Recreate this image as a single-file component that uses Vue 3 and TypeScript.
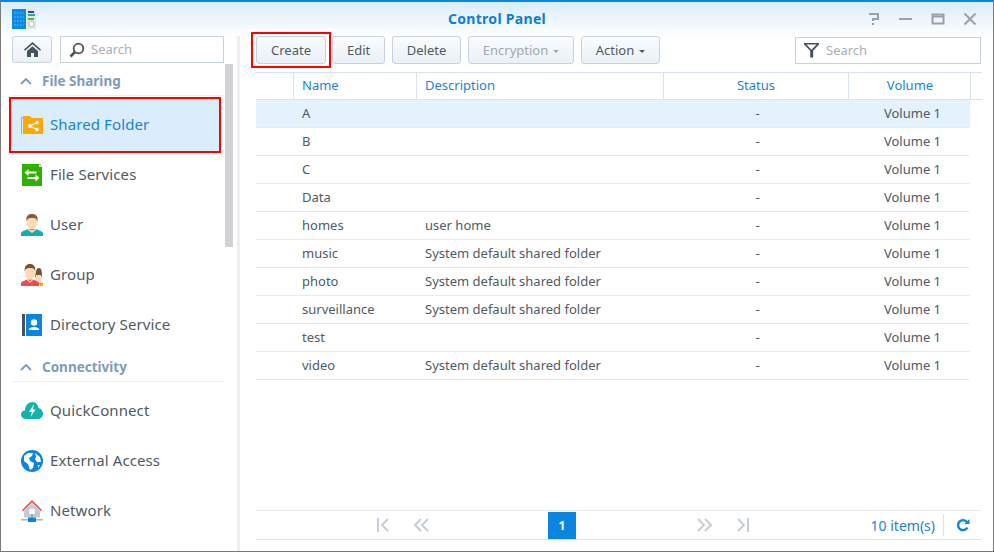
<script setup lang="ts">
// Control Panel window: sidebar with sections, toolbar, shared folder grid, pager
interface Row { name: string; desc: string }
const SYS = 'System default shared folder'
const rows: Row[] = [
  { name: 'A', desc: '' }, { name: 'B', desc: '' }, { name: 'C', desc: '' }, { name: 'Data', desc: '' },
  { name: 'homes', desc: 'user home' }, { name: 'music', desc: SYS }, { name: 'photo', desc: SYS },
  { name: 'surveillance', desc: SYS }, { name: 'test', desc: '' }, { name: 'video', desc: SYS },
]
const sharing = [
  { key: 'folder', label: 'Shared Folder', active: true },
  { key: 'services', label: 'File Services' },
  { key: 'user', label: 'User' },
  { key: 'group', label: 'Group' },
  { key: 'directory', label: 'Directory Service' },
]
const connectivity = [
  { key: 'quick', label: 'QuickConnect' },
  { key: 'external', label: 'External Access' },
  { key: 'network', label: 'Network' },
]
const sections = [
  { title: 'File Sharing', items: sharing },
  { title: 'Connectivity', items: connectivity },
]
</script>

<template>
  <div class="win">
    <header class="titlebar">
      <svg class="logo" width="24" height="20" viewBox="0 0 24 20">
        <rect x="0" y="0" width="14" height="20" fill="#0a8ae4" />
        <path d="M2 4h10M2 8h10M2 12h10M2 16h10" stroke="#5ab4ee" stroke-width="1" stroke-dasharray="2 1" />
        <rect x="15" y="0" width="9" height="20" fill="#e4e6e6" />
        <rect x="16" y="2" width="6" height="2" fill="#3c4a5c" />
        <rect x="16" y="5" width="7" height="2" fill="#22a8c8" />
        <rect x="16" y="9" width="6" height="2" fill="#6eae2c" />
        <circle cx="19.5" cy="15" r="2.6" fill="#fafafa" stroke="#b8bcbc" />
      </svg>
      <span class="title"><span class="lift">Control Panel</span></span>
      <div class="winbtns">
        <svg width="14" height="14" viewBox="0 0 14 14" fill="none" stroke="#98a2ac" stroke-width="2">
          <path d="M2 2h9v5H6v2" /><path d="M6 11v2" />
        </svg>
        <svg width="14" height="14" viewBox="0 0 14 14"><rect x="0" y="6" width="13" height="2" fill="#98a2ac" /></svg>
        <svg width="14" height="14" viewBox="0 0 14 14" fill="none" stroke="#98a2ac">
          <rect x="1.5" y="2.5" width="11" height="9" stroke-width="2" /><path d="M1 4.5h12" stroke-width="2" />
        </svg>
        <svg width="14" height="14" viewBox="0 0 14 14" fill="none" stroke="#98a2ac" stroke-width="2">
          <path d="M1.5 1.5l11 11M12.5 1.5l-11 11" />
        </svg>
      </div>
    </header>

    <div class="body">
      <aside class="side">
        <div class="side-top">
          <button class="homebtn">
            <svg width="17" height="15" viewBox="0 0 17 15" fill="#47525f">
              <path d="M8.5 0L0 7.5l1 1.2 7.5-6.4L16 8.7l1-1.2z" />
              <path d="M3 9l5.5-4.8L14 9v6H10v-4H7v4H3z" />
            </svg>
          </button>
          <div class="searchbox grow">
            <svg width="16" height="16" viewBox="0 0 16 16" fill="none" stroke="#47525f">
              <circle cx="9.5" cy="6.5" r="4.8" stroke-width="1.8" />
              <path d="M6 10l-4.5 4.5" stroke-width="2.6" />
            </svg>
            <span class="lift">Search</span>
          </div>
        </div>
        <div class="side-list">
          <section v-for="s in sections" :key="s.title">
            <div class="sec-head">
              <svg width="12" height="7" viewBox="0 0 12 7" fill="none" stroke="#7d9cb8" stroke-width="1.8">
                <path d="M1 6l5-5 5 5" />
              </svg>
              <span>{{ s.title }}</span>
            </div>
            <div v-for="it in s.items" :key="it.key" class="item" :class="{ active: it.active }">
              <svg class="ico" width="24" height="24" viewBox="0 0 24 24">
                <template v-if="it.key === 'folder'">
                  <path d="M1 4h3v1H2v16H1z" fill="#f5a800" />
                  <path d="M3 3h7l2 2h11v16H3z" fill="#fba90a" />
                  <g fill="#fff" stroke="#fff">
                    <circle cx="10" cy="13" r="1.6" /><circle cx="17" cy="9.5" r="1.4" /><circle cx="17" cy="16.5" r="1.4" />
                    <path d="M10 13l7-3.5M10 13l7 3.5" fill="none" stroke-width="1.1" />
                  </g>
                </template>
                <template v-else-if="it.key === 'services'">
                  <path d="M2 1h18l2 3v19H2z" fill="#2fb100" />
                  <path d="M19 1l3 3h-3z" fill="#e8f6e0" />
                  <path d="M4.500 9.500l4-3.500v2.500h8v2h-8v2.500zM19.500 15l-4-3.500v2.500h-8v2h8v2.500z" fill="#fff" />
                </template>
                <template v-else-if="it.key === 'user'">
                  <path d="M1 23v-3c1-2 5-3 7-4h8c2 1 6 2 7 4v3z" fill="#12b0b4" />
                  <path d="M8 15c2 3 6 3 8 0v2l-4 3-4-3z" fill="#fdd9b8" />
                  <ellipse cx="12" cy="9" rx="5.2" ry="7.4" fill="#fdd9b8" />
                  <path d="M6.5 9C5.5 2 9 1 12 1s6.500 1 5.500 8c-.5-3-1.500-4-5.500-4s-5 1-5.500 4z" fill="#8a5a38" />
                </template>
                <template v-else-if="it.key === 'group'">
                  <path d="M15 14c1-5 1-9 4-9s3 5 3 8l-3 4z" fill="#7a4e30" />
                  <path d="M16 12h5v6l2 4H14z" fill="#fdd9b8" />
                  <path d="M19 20l4 0 0 3h-3z" fill="#f5a800" />
                  <path d="M1 23v-3c1-2 4-2.500 6-3.500h6c2 1 5 1.500 6 3.500v3z" fill="#ee4b4f" />
                  <path d="M7 15c1.500 4 4.500 4 6 0v2l-3 3-3-3z" fill="#fdd9b8" />
                  <ellipse cx="10" cy="9" rx="5" ry="7.400" fill="#fdd9b8" />
                  <path d="M4.800 9C4 2 7.500 1 10 1s6 1 5.200 8c-.4-3-1.200-4-5.200-4s-4.800 1-5.200 4z" fill="#7a4e30" />
                </template>
                <template v-else-if="it.key === 'directory'">
                  <rect x="2" y="1" width="3" height="22" fill="#47525f" />
                  <rect x="6" y="1" width="16" height="22" fill="#0a86e0" />
                  <circle cx="14" cy="9.500" r="3.200" fill="#fff" />
                  <path d="M9 17v-1.500l3.500-1.500h3l3.500 1.500V17z" fill="#fff" />
                </template>
                <template v-else-if="it.key === 'quick'">
                  <path d="M6 20C2 20 1 17 1 15.500 1 13 3 11.500 5 11.500 5 7 8 3 12.500 3 16 3 18 6 18.500 9c2.500.5 4.500 3 4.500 5.500 0 3-2 5.500-5 5.500z" fill="#12b5ad" />
                  <path d="M13.500 6L9 13h3l-1.500 5 5-7.500h-3l1.500-4.500z" fill="#fff" />
                </template>
                <template v-else-if="it.key === 'external'">
                  <circle cx="12" cy="12" r="11" fill="#0a86e0" />
                  <path d="M4 7l4-3 5 0-1 3-3 2 1 3 4 2-1 5-3 2-2-6-4-3zM15 4l5 4 1 5-4 0-2-3 1-2zM18 16l2 0-2 3z" fill="#fff" />
                </template>
                <template v-else>
                  <path d="M12 1L2 11l1.200 1.200L12 3.500l8.800 8.700L22 11z" fill="#f05454" />
                  <path d="M4 12l8-7.500L20 12v6.500H4z" fill="#c3ccd6" />
                  <circle cx="12" cy="12.500" r="3" fill="#fff" />
                  <rect x="11" y="15" width="2" height="4" fill="#9eaab6" />
                  <rect x="1" y="20" width="22" height="1.500" fill="#aab4be" />
                  <rect x="8" y="18.500" width="8" height="4.500" fill="#0a86e0" />
                </template>
              </svg>
              <span class="lift">{{ it.label }}</span>
            </div>
          </section>
          <div class="scrollthumb"></div>
        </div>
      </aside>

      <main class="main">
        <div class="toolbar">
          <div class="hl"><button class="btn">Create</button></div>
          <button class="btn">Edit</button>
          <button class="btn">Delete</button>
          <button class="btn off">Encryption<i class="caret"></i></button>
          <button class="btn">Action<i class="caret"></i></button>
          <div class="searchbox filter">
            <svg width="16" height="16" viewBox="0 0 16 16" fill="#47525f">
              <path d="M0 1h15v1.600L9.200 8.800V15.500H6.200V8.800L0 2.600zM2.500 2.600L7.500 7.800 12.500 2.600z" fill-rule="evenodd" />
            </svg>
            <span>Search</span>
          </div>
        </div>

        <div class="grid">
          <div class="row head">
            <div class="c c0"></div>
            <div class="c c1"><span class="lift">Name</span></div>
            <div class="c c2"><span class="lift">Description</span></div>
            <div class="c c3"><span class="lift">Status</span></div>
            <div class="c c4"><span class="lift">Volume</span></div>
          </div>
          <div v-for="(r, i) in rows" :key="r.name" class="row" :class="{ sel: i === 0 }">
            <div class="c c0"></div>
            <div class="c c1">{{ r.name }}</div>
            <div class="c c2">{{ r.desc }}</div>
            <div class="c c3">-</div>
            <div class="c c4">Volume 1</div>
          </div>
        </div>

        <footer class="pager">
          <div class="pages">
            <svg width="16" height="14" viewBox="0 0 16 14" fill="none" stroke="#c5ced8" stroke-width="2"><path d="M2 0v14M12 1L6 7l6 6" /></svg>
            <svg class="gap1" width="16" height="14" viewBox="0 0 16 14" fill="none" stroke="#c5ced8" stroke-width="2"><path d="M8 1L2 7l6 6M15 1L9 7l6 6" /></svg>
            <span class="cur">1</span>
            <svg class="gap2" width="16" height="14" viewBox="0 0 16 14" fill="none" stroke="#c5ced8" stroke-width="2"><path d="M1 1l6 6-6 6M8 1l6 6-6 6" /></svg>
            <svg class="gap1" width="16" height="14" viewBox="0 0 16 14" fill="none" stroke="#c5ced8" stroke-width="2"><path d="M14 0v14M4 1l6 6-6 6" /></svg>
          </div>
          <span class="count">10 item(s)</span>
          <span class="refresh">
            <svg width="14" height="14" viewBox="0 0 14 14" fill="none" stroke="#0a86e0" stroke-width="2.400">
              <path d="M11.500 9.500A5 5 0 1 1 11 4" /><path d="M13.500 1v5h-5z" fill="#0a86e0" stroke="none" />
            </svg>
          </span>
        </footer>
      </main>
    </div>
  </div>
</template>

<style scoped>
.win {
  width: 994px; height: 552px; box-sizing: border-box; display: flex; flex-direction: column; overflow: hidden;
  border: 1px solid #7a7a7a; border-top: 2px solid #0a86dc; background: #fff;
  font-family: "Noto Sans", "Open Sans", sans-serif; font-size: 13px; color: #505a64;
  background-image: linear-gradient(#d9edfb, #fff 36px); background-repeat: no-repeat;
}
.lift { padding-bottom: 2px; }
.titlebar { height: 34px; flex: none; display: flex; align-items: center; justify-content: space-between; position: relative; padding: 0 16px 0 11px; }
.title { position: absolute; left: 0; right: 0; display: flex; justify-content: center; font-weight: 700; font-size: 14px; letter-spacing: .3px; color: #0a7fd8; pointer-events: none; }
.winbtns { display: flex; gap: 18px; }
.body { flex: 1; display: flex; min-height: 0; }

.side { width: 236px; flex: none; border-right: 3px solid #eeeff1; display: flex; flex-direction: column; }
.side-top { display: flex; gap: 8px; padding: 0 13px 0 11px; height: 28px; flex: none; }
.homebtn {
  width: 40px; height: 27px; padding: 0; border: 1px solid #c6d2de; border-radius: 3px;
  background: linear-gradient(#fafcfd, #e9f0f6); display: flex; align-items: center; justify-content: center;
}
.searchbox {
  height: 27px; box-sizing: border-box; border: 1px solid #c6d2de; background: #fff;
  display: flex; align-items: center; gap: 6px; padding-left: 8px; color: #a8b0b6;
}
.grow { flex: 1; }
.side-list { flex: 1; position: relative; min-height: 0; }
.scrollthumb { position: absolute; left: 224px; top: 0; width: 8px; height: 183px; background: #d0d2d5; }
.sec-head {
  height: 32px; margin: 0 14px 4px 11px; padding: 3px 0 0 8px; box-sizing: border-box; display: flex; align-items: center; gap: 10px;
  border-bottom: 1px solid #eceff2; font-weight: 700; font-size: 13.5px; color: #7d9cb8;
}
.item {
  height: 50px; display: flex; align-items: center; gap: 6px; padding-left: 19px; font-size: 15px; letter-spacing: .1px;
  box-sizing: border-box;
}
.item.active {
  height: 56px; margin: -3px 16px -3px 8px; padding-left: 9px;
  background: #d9edfc; color: #1a82dc; border: 2px solid #f00;
}
.item .ico { flex: none; }

.main { flex: 1; min-width: 0; display: flex; flex-direction: column; padding: 0 12px 0 16px; }
.toolbar { display: flex; align-items: center; height: 28px; flex: none; gap: 6.5px; }
.hl { border: 2px solid #f00; padding: 2px 3px; margin-left: -5px; margin-right: -5.5px; display: flex; }
.btn {
  height: 28px; box-sizing: border-box; padding: 0 14px; border: 1px solid #c6d2de; border-radius: 3px;
  background: linear-gradient(#fafcfd, #e9f0f6); font: inherit; color: #505a64; display: flex; align-items: center;
}
.btn.off { color: #a0a8b0; }
.caret { display: inline-block; margin-left: 5px; margin-top: 2px; border: 3px solid transparent; border-top: 3px solid currentColor; border-bottom: 0; }
.filter { margin-left: auto; width: 186px; }
.grid { margin-top: 8px; flex: 1; }
.row { display: flex; height: 28px; box-sizing: border-box; width: 714px; border-bottom: 1px solid #e6ebf0; align-items: center; padding-bottom: 2px; }
.row.sel { background: #e3f2fd; }
.head { width: 726px; height: 28px; padding-bottom: 0; color: #1a82dc; border-top: 1px solid #d8e3ee; border-bottom: 1px solid #d8e3ee; }
.head .c { height: 100%; border-right: 1px solid #d8e3ee; display: flex; align-items: center; }
.c { box-sizing: border-box; flex: none; padding-left: 8px; }
.c0 { width: 38px; }
.c1 { width: 123px; }
.c2 { width: 247px; }
.c3 { width: 185px; padding: 0 0 0 2px; text-align: center; justify-content: center; }
.c4 { width: 121px; padding: 0 0 0 6px; text-align: center; justify-content: center; }
.head .c3 { padding-left: 0; }
.head .c4 { width: 122px; padding-left: 1px; }
.pager {
  height: 28px; margin-bottom: 11px; flex: none; display: flex; align-items: center; color: #1a82dc;
  border-top: 1px solid #e6ebf0; border-bottom: 1px solid #d8e3ee;
}
.pages { display: flex; align-items: center; padding-left: 120px; flex: 1; }
.gap1 { margin-left: 21px; }
.gap2 { margin-left: 121px; }
.cur { width: 28px; height: 27px; margin-left: 119px; background: #0a86e0; color: #fff; font-size: 12px; font-weight: 700; display: flex; align-items: center; justify-content: center; }
.count { margin-right: 8px; font-size: 14px; }
.refresh { border-left: 1px solid #d8e3ee; height: 22px; width: 38px; display: flex; align-items: center; padding-left: 12px; box-sizing: border-box; }
</style>
